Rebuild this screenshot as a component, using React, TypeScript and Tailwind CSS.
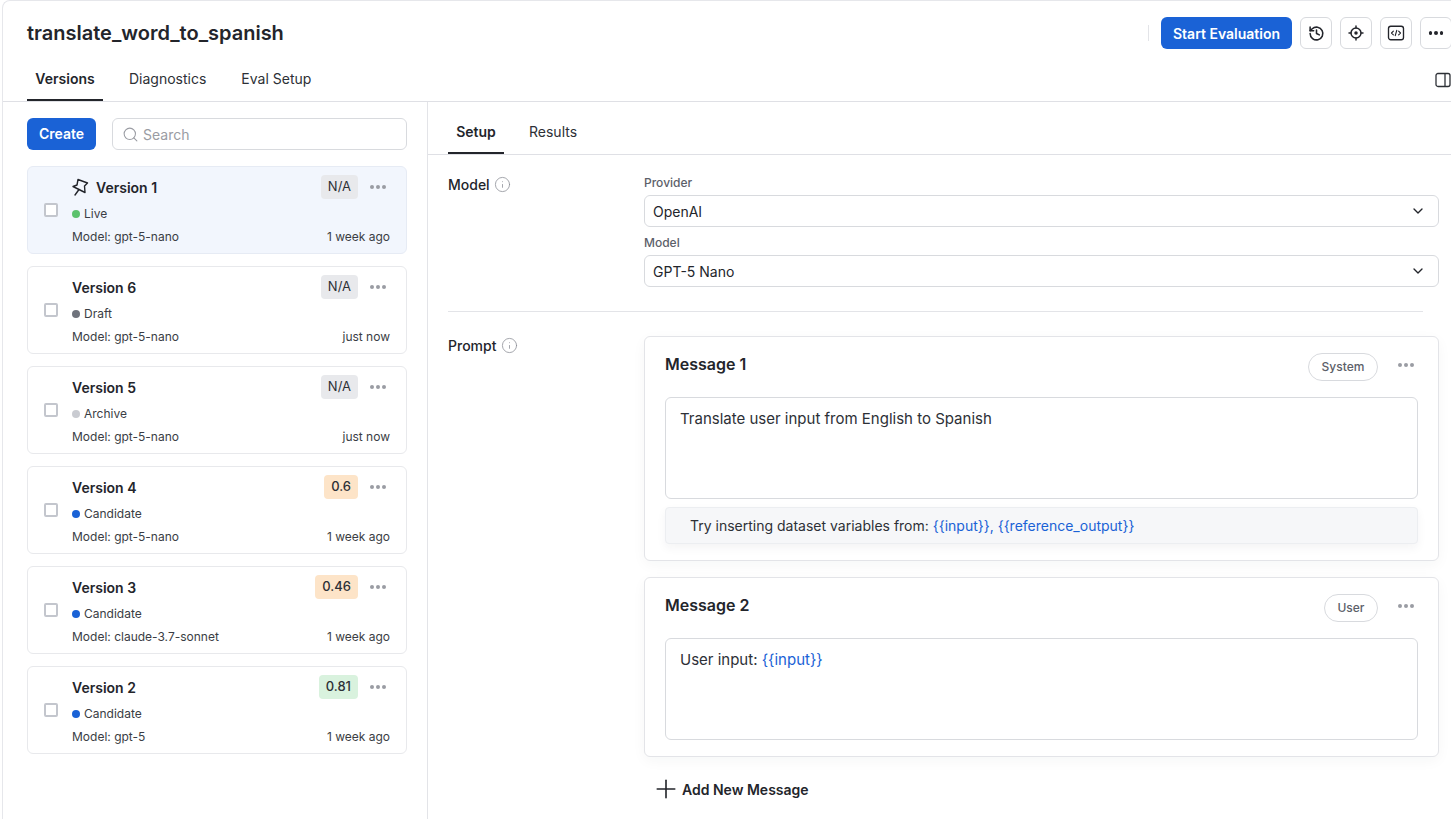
import { ChevronDown, Info, Plus, Search } from "lucide-react";
import type { ReactNode } from "react";

const versions = [
  { name: "Version 1", status: "Live", dot: "bg-[#5cc26d]", model: "gpt-5-nano", time: "1 week ago", score: "N/A", badge: "bg-[#e8e9ec] font-normal", pinned: true },
  { name: "Version 6", status: "Draft", dot: "bg-[#6f737c]", model: "gpt-5-nano", time: "just now", score: "N/A", badge: "bg-[#e8e9ec] font-normal" },
  { name: "Version 5", status: "Archive", dot: "bg-[#c9cbd1]", model: "gpt-5-nano", time: "just now", score: "N/A", badge: "bg-[#e8e9ec] font-normal" },
  { name: "Version 4", status: "Candidate", dot: "bg-[#1a62d6]", model: "gpt-5-nano", time: "1 week ago", score: "0.6", badge: "bg-[#fde4c8] font-medium" },
  { name: "Version 3", status: "Candidate", dot: "bg-[#1a62d6]", model: "claude-3.7-sonnet", time: "1 week ago", score: "0.46", badge: "bg-[#fde4c8] font-medium" },
  { name: "Version 2", status: "Candidate", dot: "bg-[#1a62d6]", model: "gpt-5", time: "1 week ago", score: "0.81", badge: "bg-[#d9f2de] font-medium" },
];

function Dots({ className }: { className: string }) {
  return (
    <span className={"flex items-center gap-[2px] " + className}>
      <span className="h-[4px] w-[4px] rounded-full bg-current" />
      <span className="h-[4px] w-[4px] rounded-full bg-current" />
      <span className="h-[4px] w-[4px] rounded-full bg-current" />
    </span>
  );
}

function PinIcon() {
  return (
    <svg width="18" height="19" viewBox="0 0 18 19" fill="none" stroke="#23252b" strokeWidth="1.4" strokeLinejoin="round" strokeLinecap="round" className="mr-[6px] shrink-0">
      <path d="M6 1.5 15.5 5l-3 3 .5 6.5L1 8.5 5 7z" />
      <path d="M7 11.5 3 17" />
    </svg>
  );
}

function HistoryIcon() {
  return (
    <svg width="17" height="17" viewBox="0 0 24 24" fill="none" stroke="#23252b" strokeWidth="2.2" strokeLinecap="round" strokeLinejoin="round">
      <path d="M3 12a9 9 0 1 0 3-6.7L3 8" />
      <path d="M3 3v5h5" />
      <path d="M12 7v5l4 2" />
    </svg>
  );
}

function TargetIcon() {
  return (
    <svg width="16" height="16" viewBox="0 0 24 24" fill="none" stroke="#23252b" strokeWidth="2.2" strokeLinecap="round">
      <circle cx="12" cy="12" r="7.5" />
      <circle cx="12" cy="12" r="2.6" fill="#23252b" stroke="none" />
      <path d="M12 1.5v3M12 19.5v3M1.5 12h3M19.5 12h3" />
    </svg>
  );
}

function CodeIcon() {
  return (
    <svg width="18" height="18" viewBox="0 0 24 24" fill="none" stroke="#23252b" strokeWidth="1.8" strokeLinecap="round" strokeLinejoin="round">
      <rect x="2" y="3" width="20" height="18" rx="3" />
      <path d="M8.5 9.5 6 12l2.5 2.5M15.5 9.5 18 12l-2.5 2.5M13 8.5l-2 7" strokeWidth="1.5" />
    </svg>
  );
}

function PanelIcon() {
  return (
    <svg width="16" height="16" viewBox="0 0 16 16" fill="none" stroke="#2d3036" strokeWidth="1.3" className="shrink-0">
      <rect x="1" y="1.5" width="14" height="13" rx="2" />
      <path d="M10 1.5v13" />
    </svg>
  );
}

function IconButton({ children }: { children: ReactNode }) {
  return (
    <button className="flex h-[32px] w-[32px] shrink-0 items-center justify-center rounded-[6px] border border-[#d8dade] bg-white text-[#23252b]">
      {children}
    </button>
  );
}

function VersionCard({ v }: { v: (typeof versions)[number] }) {
  return (
    <div className={"flex h-[88px] items-center rounded-[6px] border pl-[16px] pr-[16px] " + (v.pinned ? "border-[#e6ebf4] bg-[#f2f6fd]" : "border-[#e8e9ec] bg-white")}>
      <span className="mr-[14px] h-[14px] w-[14px] shrink-0 rounded-[2px] border-2 border-[#c3c6cd] bg-white" />
      <div className="min-w-0 flex-1 pt-[2px]">
        <div className="flex h-[24px] items-center">
          {v.pinned && <PinIcon />}
          <span className="text-[14px] font-semibold text-[#23252b]">{v.name}</span>
          <span className={"ml-auto flex h-[24px] items-center rounded-[4px] px-[7px] text-[13px] text-[#2d3036] " + v.badge}>{v.score}</span>
          <Dots className="ml-[12px] mr-[4px] text-[#9a9ca3]" />
        </div>
        <div className="mt-[5px] flex h-[20px] items-center text-[12px] text-[#3a3d44]">
          <span className={"mr-[4px] h-[8px] w-[8px] rounded-full " + v.dot} />
          {v.status}
        </div>
        <div className="mt-[3px] flex h-[20px] items-center justify-between text-[12px] text-[#3a3d44]">
          <span>Model: {v.model}</span>
          <span>{v.time}</span>
        </div>
      </div>
    </div>
  );
}

function SelectBox({ label, value }: { label: string; value: string }) {
  return (
    <div>
      <div className="flex h-[20px] items-center text-[12px] font-medium text-[#5c6069]">{label}</div>
      <div className="mt-[2px] flex h-[32px] items-center justify-between rounded-[6px] border border-[#d8dade] bg-white pl-[8px] pr-[12px] text-[14px] text-[#23252b]">
        {value}
        <ChevronDown size={16} strokeWidth={2} className="text-[#23252b]" />
      </div>
    </div>
  );
}

function Variable({ children }: { children: string }) {
  return <span className="text-[#1a62d6]">{children}</span>;
}

function MessageCard({ title, role, roleWidth, height, children, hint }: { title: string; role: string; roleWidth: string; height: string; children: ReactNode; hint?: boolean }) {
  return (
    <div className={"rounded-[6px] border border-[#e3e4e8] bg-white px-[20px] pt-[16px] shadow-[0_4px_14px_rgba(30,40,60,0.04)] " + height}>
      <div className="flex h-[28px] items-center">
        <span className="pb-[6px] text-[16px] font-semibold text-[#23252b]">{title}</span>
        <span className={"ml-auto flex h-[28px] items-center justify-center rounded-full border border-[#d8dade] text-[12px] font-medium text-[#5c6069] " + roleWidth}>{role}</span>
        <Dots className="mb-[4px] ml-[20px] mr-[4px] text-[#9a9ca3]" />
      </div>
      <div className="mt-[16px] h-[102px] rounded-[6px] border border-[#d8dade] px-[14px] py-[11px] text-[15px] leading-[20px] text-[#2d3036]">
        {children}
      </div>
      {hint && (
        <div className="mt-[8px] flex h-[37px] items-center rounded-[4px] border border-[#eceef1] bg-[#f6f7f9] pl-[24px] text-[14px] text-[#2d3036] shadow-[0_4px_10px_rgba(30,40,60,0.05)]">
          <span>
            Try inserting dataset variables from: <Variable>{"{{input}}, {{reference_output}}"}</Variable>
          </span>
        </div>
      )}
    </div>
  );
}

export default function App() {
  return (
    <div className="ml-[2px] flex h-[819px] w-[1449px] flex-col overflow-hidden rounded-tl-[8px] border-l border-t border-[#e6e7eb] bg-white font-['Inter',sans-serif]">
      <header className="h-[101px] shrink-0 border-b border-[#dfe0e5]">
        <div className="flex h-[64px] items-center pl-[24px]">
          <h1 className="text-[20px] font-semibold text-[#23252b]">translate_word_to_spanish</h1>
          <div className="ml-auto flex w-[303px] shrink-0 items-center gap-[8px]">
            <span className="mr-[4px] h-[16px] w-px shrink-0 bg-[#e3e4e8]" />
            <button className="h-[32px] w-[131px] shrink-0 rounded-[6px] bg-[#1a62d6] text-[14px] font-semibold text-white">Start Evaluation</button>
            <IconButton><HistoryIcon /></IconButton>
            <IconButton><TargetIcon /></IconButton>
            <IconButton><CodeIcon /></IconButton>
            <IconButton><Dots className="text-[#23252b] [&>span]:h-[3.5px] [&>span]:w-[3.5px]" /></IconButton>
          </div>
        </div>
        <div className="flex h-[36px] items-center pl-[24px]">
          <div className="flex h-[36px] w-[76px] items-center justify-center border-b-2 border-[#23252b] pb-[8px] text-[14px] font-semibold text-[#23252b]">Versions</div>
          <div className="ml-[26px] pb-[10px] text-[14px] text-[#2d3036]">Diagnostics</div>
          <div className="ml-[35px] pb-[10px] text-[14px] text-[#2d3036]">Eval Setup</div>
          <div className="ml-auto flex w-[16px] items-center overflow-visible pb-[6px]"><PanelIcon /></div>
        </div>
      </header>

      <div className="flex min-h-0 flex-1">
        <aside className="w-[425px] shrink-0 border-r border-[#e3e4e8] pl-[24px] pr-[20px] pt-[16px]">
          <div className="flex gap-[16px]">
            <button className="h-[32px] w-[69px] shrink-0 rounded-[6px] bg-[#1a62d6] pb-[1px] text-[14px] font-semibold text-white">Create</button>
            <div className="flex h-[32px] flex-1 items-center gap-[4px] rounded-[6px] border border-[#d8dade] pl-[9px] text-[14px] text-[#9a9ca3]">
              <Search size={17} strokeWidth={1.5} />
              Search
            </div>
          </div>
          <div className="mt-[16px] flex flex-col gap-[12px]">
            {versions.map((v) => <VersionCard key={v.name} v={v} />)}
          </div>
        </aside>

        <main className="min-w-0 flex-1">
          <div className="flex h-[53px] items-end border-b border-[#dfe0e5] pl-[20px]">
            <div className="flex h-[40px] w-[56px] items-center justify-center border-b-2 border-[#23252b] pb-[4px] text-[14px] font-semibold text-[#23252b]">Setup</div>
            <div className="ml-[25px] flex h-[40px] items-center pb-[6px] text-[14px] text-[#2d3036]">Results</div>
          </div>

          <div className="flex pl-[20px] pr-[12px] pt-[18px]">
            <div className="flex h-[22px] w-[196px] shrink-0 items-center gap-[4px] text-[14px] font-medium text-[#23252b]">
              Model <Info size={17} strokeWidth={1.1} className="text-[#8b8e96]" />
            </div>
            <div className="flex-1">
              <div className="flex flex-col gap-[6px]">
                <SelectBox label="Provider" value="OpenAI" />
                <SelectBox label="Model" value="GPT-5 Nano" />
              </div>
            </div>
          </div>

          <div className="ml-[20px] mr-[28px] mt-[24px] border-t border-[#e3e4e8]" />

          <div className="flex pl-[20px] pr-[12px] pt-[24px]">
            <div className="flex h-[18px] w-[196px] shrink-0 items-center gap-[5px] text-[14px] font-medium text-[#23252b]">
              Prompt <Info size={17} strokeWidth={1.1} className="text-[#8b8e96]" />
            </div>
            <div className="flex-1">
              <div className="flex flex-col gap-[16px]">
                <MessageCard title="Message 1" role="System" roleWidth="w-[70px]" height="h-[225px]" hint>
                  Translate user input from English to Spanish
                </MessageCard>
                <MessageCard title="Message 2" role="User" roleWidth="w-[54px]" height="h-[180px]">
                  User input: <Variable>{"{{input}}"}</Variable>
                </MessageCard>
              </div>
              <div className="mt-[20px] flex h-[24px] items-center gap-[1px] pl-[7px] text-[14px] font-semibold text-[#23252b]">
                <Plus size={30} strokeWidth={1.3} />
                Add New Message
              </div>
            </div>
          </div>
        </main>
      </div>
    </div>
  );
}
